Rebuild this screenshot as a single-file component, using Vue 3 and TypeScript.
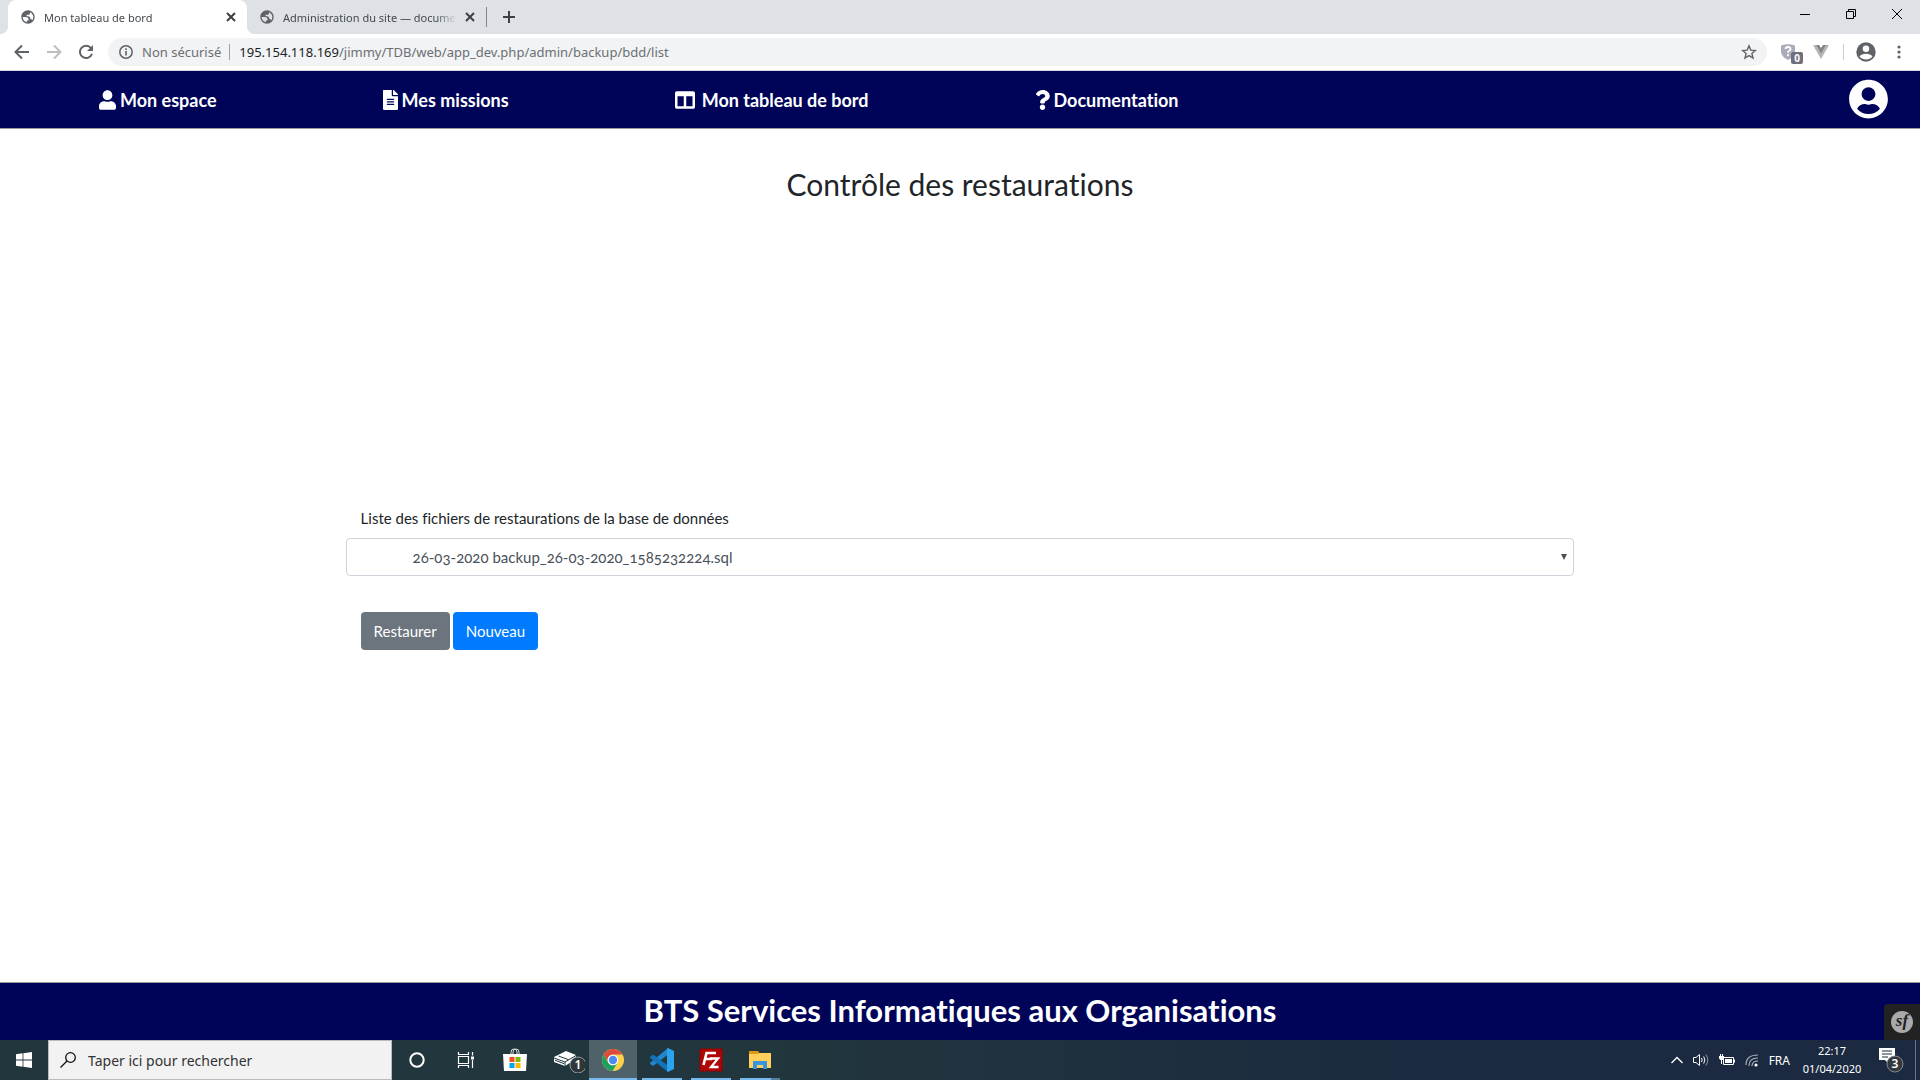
<script setup lang="ts">
import { ref } from 'vue'

interface BrowserTab { title: string; active: boolean }
interface NavItem { label: string; icon: string; box: string; width: number; path: string }

const tabs: BrowserTab[] = [
  { title: 'Mon tableau de bord', active: true },
  { title: 'Administration du site — documentation', active: false },
]

const navItems: NavItem[] = [
  {
    label: 'Mon espace', icon: 'user', box: '0 0 448 512', width: 17,
    path: 'M224 256c70.7 0 128-57.3 128-128S294.7 0 224 0 96 57.3 96 128s57.300 128 128 128zm89.600 32h-16.700c-22.200 10.200-46.900 16-72.900 16s-50.600-5.800-72.900-16h-16.700C60.200 288 0 348.200 0 422.400V464c0 26.500 21.500 48 48 48h352c26.500 0 48-21.500 48-48v-41.600c0-74.200-60.200-134.400-134.400-134.400z',
  },
  {
    label: 'Mes missions', icon: 'file', box: '0 0 384 512', width: 15,
    path: 'M224 136V0H24C10.700 0 0 10.700 0 24v464c0 13.300 10.700 24 24 24h336c13.300 0 24-10.700 24-24V160H248c-13.200 0-24-10.800-24-24zm64 236c0 6.600-5.400 12-12 12H108c-6.600 0-12-5.400-12-12v-8c0-6.600 5.400-12 12-12h168c6.600 0 12 5.400 12 12v8zm0-64c0 6.600-5.400 12-12 12H108c-6.600 0-12-5.400-12-12v-8c0-6.600 5.400-12 12-12h168c6.600 0 12 5.400 12 12v8zm0-72v8c0 6.600-5.400 12-12 12H108c-6.600 0-12-5.400-12-12v-8c0-6.600 5.400-12 12-12h168c6.600 0 12 5.400 12 12zm96-114.100v6.100H256V0h6.100c6.400 0 12.500 2.500 17 7l97.900 98c4.500 4.500 7 10.600 7 16.900z',
  },
  {
    label: 'Mon tableau de bord', icon: 'columns', box: '0 0 512 512', width: 20,
    path: 'M464 32H48C21.490 32 0 53.490 0 80v352c0 26.510 21.490 48 48 48h416c26.510 0 48-21.490 48-48V80c0-26.510-21.490-48-48-48zM224 416H64V160h160v256zm224 0H288V160h160v256z',
  },
  {
    label: 'Documentation', icon: 'question', box: '0 0 384 512', width: 15,
    path: 'M202.021 0C122.202 0 70.503 32.703 29.914 91.026c-7.363 10.580-5.093 25.086 5.178 32.874l43.138 32.709c10.373 7.865 25.132 6.026 33.253-4.148 25.049-31.381 43.630-49.449 82.757-49.449 30.764 0 68.816 19.799 68.816 49.631 0 22.552-18.617 34.134-48.993 51.164-35.423 19.860-82.299 44.576-82.299 106.405V320c0 13.255 10.745 24 24 24h72.471c13.255 0 24-10.745 24-24v-5.773c0-42.860 125.268-44.645 125.268-160.627C377.504 66.256 286.902 0 202.021 0zM192 373.459c-38.196 0-69.271 31.075-69.271 69.271 0 38.195 31.075 69.270 69.271 69.270s69.271-31.075 69.271-69.271-31.075-69.270-69.271-69.270z',
  },
]

const backups = ['26-03-2020 backup_26-03-2020_1585232224.sql']
const selected = ref(backups[0])
const search = ref('')
</script>

<template>
  <div class="screen">
    <header class="tabstrip">
      <div class="tabs">
        <div v-for="tab in tabs" :key="tab.title" class="tab" :class="{ active: tab.active }">
          <svg class="globe" viewBox="0 0 24 24" width="16" height="16"><path fill="#5f6368" d="M12 2C6.480 2 2 6.480 2 12s4.480 10 10 10 10-4.480 10-10S17.520 2 12 2zM4 12h4.400c3.410.020 4.900 1.730 4.450 5.130h-2.500v2.700C6.760 19.100 4 15.900 4 12zm16 0c0 1.800-.600 3.500-1.600 4.850-.700-1.200-1.700-1.850-3-1.850v-1c0-1.500-1.500-3-3-3h-2.500V8.700h3c1.200 0 2-.800 2-2V4.700C17.900 5.900 20 8.700 20 12z" /></svg>
          <span class="tab-title">{{ tab.title }}</span>
          <button class="plain close" type="button" aria-label="Fermer l’onglet">
            <svg viewBox="0 0 10 10" width="10" height="10"><path d="M1 1l8 8M9 1L1 9" stroke="#3c4043" stroke-width="2" /></svg>
          </button>
        </div>
        <span class="tab-rule"></span>
        <button class="plain new-tab" type="button" aria-label="Nouvel onglet">
          <svg viewBox="0 0 12 12" width="12" height="12"><path d="M6 0v12M0 6h12" stroke="#3c4043" stroke-width="2" /></svg>
        </button>
      </div>
      <div class="window-controls">
        <button class="plain" type="button" aria-label="Réduire"><svg viewBox="0 0 12 12" width="12" height="12"><path d="M1 6.500h10" stroke="#000" /></svg></button>
        <button class="plain" type="button" aria-label="Restaurer la fenêtre"><svg viewBox="0 0 12 12" width="12" height="12" fill="none" stroke="#000"><path d="M1.500 3.500h7v7h-7zM3.500 3.500v-2h7v7h-2" /></svg></button>
        <button class="plain" type="button" aria-label="Fermer"><svg viewBox="0 0 12 12" width="12" height="12"><path d="M1 1l10 10M11 1L1 11" stroke="#000" /></svg></button>
      </div>
    </header>

    <div class="toolbar">
      <button class="plain tool" type="button" aria-label="Précédent"><svg viewBox="0 0 16 16" width="16" height="16" fill="none" stroke="#5f6368" stroke-width="2"><path d="M15 8H2M8 1.500L1.500 8 8 14.500" /></svg></button>
      <button class="plain tool" type="button" aria-label="Suivant"><svg viewBox="0 0 16 16" width="16" height="16" fill="none" stroke="#bdbfc1" stroke-width="2"><path d="M1 8h13M8 1.500L14.500 8 8 14.500" /></svg></button>
      <button class="plain tool" type="button" aria-label="Actualiser"><svg viewBox="0 0 16 16" width="16" height="16"><path d="M13 4A6.200 6.200 0 1 0 14 9.800" fill="none" stroke="#5f6368" stroke-width="2" /><path d="M15 1v6H9z" fill="#5f6368" /></svg></button>
      <div class="address">
        <svg viewBox="0 0 14 14" width="14" height="14"><circle cx="7" cy="7" r="6.200" fill="none" stroke="#5f6368" stroke-width="1.500" /><path d="M7 6v4.500M7 3.300v1.700" stroke="#5f6368" stroke-width="1.600" /></svg>
        <span class="security">Non sécurisé</span>
        <span class="address-rule"></span>
        <span class="url"><b>195.154.118.169</b>/jimmy/TDB/web/app_dev.php/admin/backup/bdd/list</span>
        <button class="plain star" type="button" aria-label="Ajouter aux favoris"><svg viewBox="0 0 16 16" width="16" height="16"><path d="M8 1.800l1.800 4.300 4.600.400-3.500 3 1.100 4.500-4-2.400-4 2.400 1.100-4.500-3.500-3 4.600-.400z" fill="none" stroke="#5f6368" stroke-width="1.400" /></svg></button>
      </div>
      <div class="extensions">
        <button class="plain shield" type="button" aria-label="Extension">
          <svg viewBox="0 0 14 16" width="14" height="16"><path d="M0 1.500Q7-1 14 1.500V7q0 6-7 9-7-3-7-9z" fill="#a9abba" /><path d="M4.500 5Q4.700 3 7 3t2.500 2Q9.500 6.300 8 7q-1 .500-1 1.800M7 10.200v2" fill="none" stroke="#fff" stroke-width="1.900" /></svg>
          <span class="shield-count">0</span>
        </button>
        <button class="plain vue" type="button" aria-label="Vue.js devtools"><svg viewBox="0 0 16 14" width="16" height="14"><path d="M0 0h6l2 3.300L10 0h6L8 14z" fill="#b5b5b5" /><path d="M3.200 0H6l2 3.300L10 0h2.800L8 8.500z" fill="#858585" /></svg></button>
        <span class="ext-rule"></span>
        <button class="plain profile" type="button" aria-label="Profil"><svg viewBox="0 0 496 512" width="20" height="20"><circle cx="248" cy="256" r="248" fill="#5f6368" /><circle cx="248" cy="174" r="82" fill="#fff" /><path d="M82 370c60-90 272-90 332 0-70 100-262 100-332 0z" fill="#fff" /></svg></button>
        <button class="plain more" type="button" aria-label="Menu"><svg viewBox="0 0 4 14" width="4" height="14" fill="#5f6368"><circle cx="2" cy="2" r="1.600" /><circle cx="2" cy="7" r="1.600" /><circle cx="2" cy="12" r="1.600" /></svg></button>
      </div>
    </div>

    <nav class="navbar">
      <a v-for="item in navItems" :key="item.label" href="#" class="nav-link" :class="item.icon">
        <svg :viewBox="item.box" :width="item.width" height="20" fill="#fff"><path :d="item.path" /></svg>
        <span>{{ item.label }}</span>
      </a>
      <a href="#" class="account" aria-label="Mon compte">
        <svg viewBox="0 0 496 512" width="39" height="40"><path fill="#fff" d="M248 8C111 8 0 119 0 256s111 248 248 248 248-111 248-248S385 8 248 8zm0 96c48.600 0 88 39.400 88 88s-39.400 88-88 88-88-39.400-88-88 39.400-88 88-88zm0 344c-58.700 0-111.300-26.600-146.500-68.200 18.800-35.400 55.600-59.800 98.500-59.800 2.400 0 4.800.400 7.100 1.100 13 4.200 26.600 6.900 40.900 6.900 14.300 0 28-2.700 40.900-6.900 2.300-.700 4.700-1.100 7.100-1.100 42.900 0 79.700 24.400 98.500 59.800C359.300 421.400 306.700 448 248 448z" /></svg>
      </a>
    </nav>

    <main class="content">
      <h2>Contrôle des restaurations</h2>
      <form class="restore" @submit.prevent>
        <label for="backup">Liste des fichiers de restaurations de la base de données</label>
        <div class="select-wrap">
          <select id="backup" v-model="selected">
            <option v-for="file in backups" :key="file">{{ file }}</option>
          </select>
          <svg class="caret" viewBox="0 0 6 6" width="6" height="6"><path d="M0 0h6L3 6z" fill="#495057" /></svg>
        </div>
        <div class="actions">
          <button class="btn secondary" type="submit">Restaurer</button>
          <button class="btn primary" type="button">Nouveau</button>
        </div>
      </form>
    </main>

    <footer class="footer">
      <strong>BTS Services Informatiques aux Organisations</strong>
      <button class="sf" type="button" aria-label="Barre de débogage"><span>sf</span></button>
    </footer>

    <div class="taskbar">
      <button class="plain start" type="button" aria-label="Démarrer"><svg viewBox="0 0 16 16" width="16" height="16" fill="#fff"><path d="M0 2.200L6.600 1.300v6.300H0zM7.400 1.200L16 0v7.600H7.400zM0 8.400h6.600v6.300L0 13.800zM7.400 8.400H16V16l-8.600-1.200z" /></svg></button>
      <label class="search">
        <svg viewBox="0 0 16 16" width="16" height="16" fill="none" stroke="#111" stroke-width="1.300"><circle cx="10.500" cy="5.500" r="4.800" /><path d="M7 9L.5 15.500" /></svg>
        <input v-model="search" type="text" placeholder="Taper ici pour rechercher" aria-label="Rechercher" />
      </label>
      <div class="apps">
        <button class="plain app" type="button" aria-label="Cortana"><svg viewBox="0 0 16 16" width="16" height="16"><circle cx="8" cy="8" r="6.700" fill="none" stroke="#fff" stroke-width="2" /></svg></button>
        <button class="plain app" type="button" aria-label="Affichage des tâches"><svg viewBox="0 0 18 16" width="18" height="16" fill="none" stroke="#fff" stroke-width="1.200"><path d="M1.500 4.500h10v7h-10zM1.500 0v2.500h10V0M1.500 16v-2.500h10V16M15.500 0v3.500M15.500 8v8" /><path d="M14 4.500h3v3h-3z" fill="#fff" stroke="none" /></svg></button>
        <button class="plain app" type="button" aria-label="Microsoft Store"><svg viewBox="0 0 24 24" width="24" height="24"><path d="M8 7V4q0-3 3-3t3 3v3M10 7V4q0-3 3-3t3 3v3" fill="none" stroke="#d8dcde" stroke-width="1" /><path d="M0 6h24l-1 17H1z" fill="#fff" /><path d="M6.500 9h5v5h-5z" fill="#f25022" /><path d="M12.500 9h5v5h-5z" fill="#7fba00" /><path d="M6.500 15h5v5h-5z" fill="#00a4ef" /><path d="M12.500 15h5v5h-5z" fill="#ffb900" /></svg></button>
        <button class="plain app" type="button" aria-label="Éjection"><svg viewBox="-10 0 42 26" width="42" height="26"><path d="M1 10L13 4l10 4v4l-11 7L1 15z" fill="#fff" /><path d="M1 11l11 4 11-6.500M12 15v4M5.500 9l10 3.700M2 13.200l9 3.500" fill="none" stroke="#22363d" stroke-width="1" /><circle cx="25" cy="18" r="8" fill="#30373b" stroke="#92999d" /><text x="25" y="22" text-anchor="middle" font-size="12" font-weight="600" fill="#fff">1</text></svg></button>
        <button class="plain app open current" type="button" aria-label="Google Chrome"><svg viewBox="0 0 24 24" width="24" height="24"><circle cx="12" cy="12" r="11" fill="#fdd04a" /><path d="M2.500 6.500A11 11 0 0 1 21.500 6.500H12a5.500 5.500 0 0 0-5.200 7.300z" fill="#dd4b3e" /><path d="M2.500 6.500A11 11 0 0 0 11.500 23l5.200-8.500A5.500 5.500 0 0 1 7.200 14.700z" fill="#1aa15f" /><circle cx="12" cy="12" r="5.300" fill="#fff" /><circle cx="12" cy="12" r="4.200" fill="#4c8bf5" /></svg></button>
        <button class="plain app open" type="button" aria-label="Visual Studio Code"><svg viewBox="0 0 24 24" width="24" height="24"><path d="M18 0v6.500L3 18 0 16v-1z" fill="#1f86cf" /><path d="M0 9l3-2.500 15 11V24L0 9.800z" fill="#1273ba" /><path d="M18 0l6 3v18l-6 3-1-1V1z" fill="#29a3ee" /></svg></button>
        <button class="plain app open" type="button" aria-label="FileZilla"><svg viewBox="0 0 24 24" width="24" height="24"><path d="M1 1h22v22H1z" fill="#b00505" stroke="#930000" stroke-width="2" stroke-dasharray="1 1" /><path d="M4.500 17L7.500 5H17M7 11h6" fill="none" stroke="#fff" stroke-width="2.600" /><path d="M11 10.500h8l-7 8.500h7.500" fill="none" stroke="#fff" stroke-width="2.300" /></svg></button>
        <button class="plain app open grouped" type="button" aria-label="Explorateur de fichiers"><svg viewBox="0 0 22 20" width="22" height="20"><path d="M0 1h9l1 2h12v15H0z" fill="#ffd05c" /><path d="M0 1h9l1 2-1 1H0z" fill="#dd9b10" /><path d="M4 19v-8h14v8h-4v-4H8v4z" fill="#3b93dd" /></svg></button>
      </div>
      <div class="tray">
        <svg viewBox="0 0 12 8" width="12" height="8"><path d="M.5 7L6 1.500 11.500 7" fill="none" stroke="#fff" stroke-width="1.300" /></svg>
        <svg viewBox="0 0 16 14" width="16" height="14" fill="none" stroke="#fff"><path d="M.5 4.500H3L6.500 1.500v11L3 9.500H.5z" /><path d="M8.500 5q1.300 2 0 4M10.700 3.500q2.300 3.500 0 7" /><path d="M12.800 1.500q4 5.500 0 11" opacity=".5" /></svg>
        <svg viewBox="0 0 16 14" width="16" height="14"><path d="M4.500 4.500h10v7h-10zM15.500 6.500v3" fill="none" stroke="#fff" /><path d="M6 6h7v4H6zM0 3h5v2.500L3.500 7h-2L0 5.500zM1 1h1v2H1zM3 1h1v2H3zM2 7h1v4H2z" fill="#fff" /></svg>
        <svg viewBox="0 0 14 14" width="14" height="14" fill="none" stroke="#aab1bc" stroke-width="1.200"><path d="M1 12Q1 2 13 2M4 13q0-8 9-8M7 13q0-5 6-5" /><circle cx="11" cy="12" r="1.600" fill="#fff" stroke="none" /></svg>
        <span class="lang">FRA</span>
        <div class="clock"><span>22:17</span><span>01/04/2020</span></div>
        <svg class="notifications" viewBox="0 0 26 26" width="26" height="26"><path d="M1 1h16v12h-6v4l-4-4H1z" fill="#fff" /><path d="M4 4h10M4 7h10M4 10h6" stroke="#1b2a40" stroke-width="1.200" /><circle cx="17" cy="17" r="8" fill="#33383f" stroke="#83888e" /><text x="17" y="21" text-anchor="middle" font-size="12" font-weight="600" fill="#fff">3</text></svg>
        <span class="desktop"></span>
      </div>
    </div>
  </div>
</template>

<style>
body { margin: 0; background: #fff; }
*, *::before, *::after { box-sizing: border-box; }
</style>

<style scoped>
.screen { display: flex; flex-direction: column; min-height: 100vh; font-family: "Noto Sans", "Open Sans", sans-serif; font-size: 12px; font-variant-ligatures: no-common-ligatures; color: #212529; }
.plain { display: flex; align-items: center; justify-content: center; padding: 0; border: 0; background: none; font: inherit; }
svg { display: block; flex: none; }

.tabstrip { display: flex; justify-content: space-between; height: 34px; background: #dee1e6; }
.tabs { display: flex; align-items: center; padding-left: 8px; }
.tab { display: flex; align-items: center; gap: 8px; width: 239px; height: 34px; padding: 0 10px 0 12px; color: #45494d; }
.tab.active { position: relative; background: #fff; border-radius: 8px 8px 0 0; }
.tab.active::before, .tab.active::after { content: ""; position: absolute; bottom: 0; width: 8px; height: 8px; }
.tab.active::before { left: -8px; background: radial-gradient(circle at 0 0, transparent 8px, #fff 8px); }
.tab.active::after { right: -8px; background: radial-gradient(circle at 100% 0, transparent 8px, #fff 8px); }
.tab-title { flex: 1; overflow: hidden; white-space: nowrap; font-size: 11px; mask-image: linear-gradient(to left, transparent, #000 20px); }
.tab .close { width: 12px; }
.tab-rule { width: 1px; height: 20px; background: #80868b; }
.new-tab { width: 28px; height: 28px; margin-left: 8px; }
.window-controls { display: flex; }
.window-controls button { width: 46px; height: 28px; }

.toolbar { display: flex; align-items: center; height: 37px; padding: 0 11px 0 6px; background: #fff; border-bottom: 1px solid #d5d8dc; }
.tool { width: 32px; height: 32px; }
.address { display: flex; flex: 1; align-items: center; height: 28px; margin-left: 6px; padding: 0 10px 0 11px; border-radius: 14px; background: #f1f3f4; color: #6b6f73; font-size: 13px; }
.security { margin-left: 9px; }
.address-rule { width: 1px; height: 16px; margin: 0 9px 0 8px; background: #9aa0a6; }
.url { flex: 1; }
.url b { font-weight: 400; color: #202124; }
.extensions { display: flex; align-items: center; margin-left: 14px; }
.shield { position: relative; width: 14px; height: 20px; }
.shield-count { position: absolute; left: 10px; top: 10px; width: 12px; height: 12px; border-radius: 2px; background: #6f6f7e; color: #fff; font-size: 10px; font-weight: 700; line-height: 12px; }
.vue { margin-left: 18px; }
.ext-rule { width: 1px; height: 16px; margin: 0 12px 0 14px; background: #c9ccd0; }
.more { width: 20px; margin-left: 13px; }

.navbar { display: flex; align-items: center; gap: 166px; height: 58px; padding: 0 32px 0 99px; background: #000459; border-bottom: 1px solid #999; }
.nav-link { display: flex; align-items: center; gap: 4px; color: #fff; font: 700 18px/24px Lato, sans-serif; font-variant-ligatures: no-common-ligatures; text-decoration: none; white-space: nowrap; }
.nav-link.columns { gap: 7px; }
.account { margin: 0 0 2px auto; }

.content { flex: 1; }
h2 { margin: 35px 0 0; font: 400 30px/40px Lato, sans-serif; font-variant-ligatures: no-common-ligatures; text-align: center; }
.restore { margin: 302px 18% 0; font: 400 15px/24px Lato, sans-serif; font-variant-ligatures: no-common-ligatures; }
.restore label { display: block; margin: 0 15px 8px; }
.select-wrap { position: relative; }
select { display: block; width: 100%; height: 38px; padding: 0 24px 0 66px; appearance: none; border: 1px solid #ced4da; border-radius: 4px; background: #fff; color: #495057; font: inherit; font-variant-numeric: oldstyle-nums; }
.caret { position: absolute; right: 7px; top: 16px; }
.actions { display: flex; gap: 3px; margin: 36px 15px 0; }
.btn { height: 38px; padding: 0 13px; border: 0; border-radius: 4px; color: #fff; font: inherit; }
.secondary { background: #6c757d; }
.primary { background: #007bff; }

.footer { position: relative; height: 58px; border-top: 1px solid #999; background: #000459; color: #fff; text-align: center; }
.footer strong { font: 700 31px/54px Lato, sans-serif; font-variant-ligatures: no-common-ligatures; }
.sf { position: absolute; right: 0; bottom: 0; display: flex; align-items: center; justify-content: center; width: 36px; height: 36px; padding: 0; border: 0; border-radius: 4px 0 0; background: #222; }
.sf span { width: 22px; height: 22px; border-radius: 50%; background: #aaa; color: #222; font: italic 700 17px/19px "Liberation Serif", serif; }

.taskbar { display: flex; height: 40px; background: linear-gradient(90deg, #22363d 0%, #22363d 40%, #1b2a40 75%, #1b2a40); color: #fff; }
.start { width: 48px; }
.search { display: flex; align-items: center; gap: 12px; width: 344px; padding-left: 11px; border: 1px solid #bbb; background: #f2f2f2; }
.search input { flex: 1; min-width: 0; padding: 0; border: 0; outline: 0; background: none; color: #333; font: 14px "Noto Sans", sans-serif; }
.search input::placeholder { color: #333; opacity: 1; }
.apps { display: flex; gap: 1px; padding-left: 1px; }
.app { position: relative; width: 48px; color: #fff; }
.open::after { content: ""; position: absolute; bottom: 0; left: 4px; right: 4px; height: 2px; background: #76b9ed; }
.current { background: #4f626a; }
.current::after { left: 0; right: 0; }
.grouped::after { background: linear-gradient(90deg, #76b9ed 31px, #547f9f 31px); }
.tray { display: flex; align-items: center; margin-left: auto; gap: 10px; }
.lang { font-size: 12px; }
.clock { display: flex; flex-direction: column; width: 64px; margin-right: 4px; font-size: 11px; line-height: 18px; text-align: center; }
.notifications { margin-right: 1px; }
.desktop { width: 5px; height: 40px; border-left: 1px solid #697582; }
</style>
